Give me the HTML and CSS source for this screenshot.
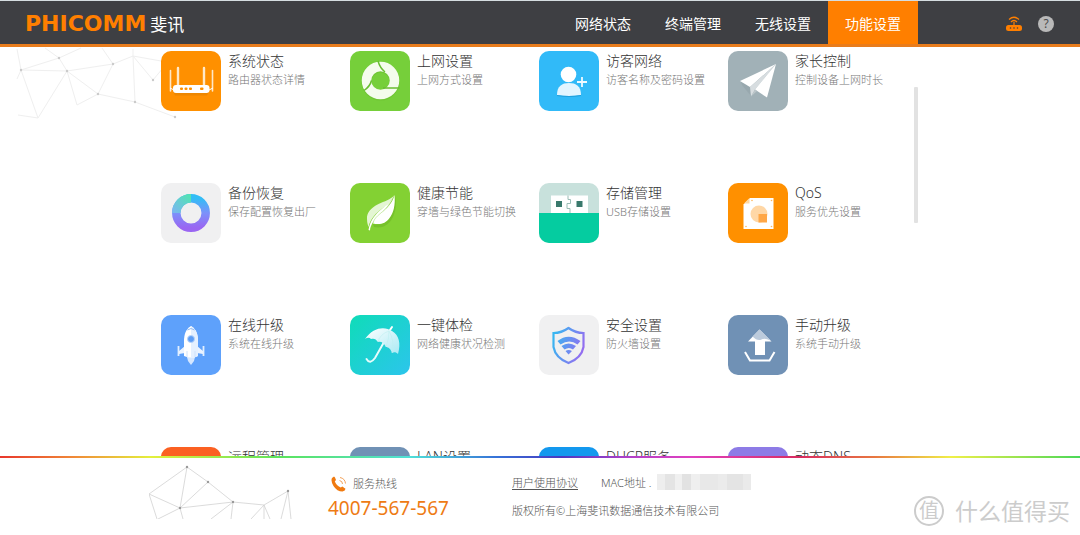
FILE: index.html
```html
<!DOCTYPE html>
<html lang="zh-CN">
<head>
<meta charset="utf-8">
<title>斐讯路由器 - 功能设置</title>
<link rel="stylesheet" href="styles.css">
</head>
<body>
<header class="header">
  <a class="logo" href="#"><span class="logo-en">PHICOMM</span><span class="logo-cn">斐讯</span></a>
  <nav class="nav">
    <a class="nav-item" href="#">网络状态</a>
    <a class="nav-item" href="#">终端管理</a>
    <a class="nav-item" href="#">无线设置</a>
    <a class="nav-item active" href="#">功能设置</a>
  </nav>
  <div class="tools">
    <button class="tool" aria-label="路由器">
      <svg width="16" height="16" viewBox="0 0 16 16"><rect x="0" y="9" width="16" height="6" rx="2.5" fill="#ff7f00"/><g fill="#3e3f43"><circle cx="4.500" cy="12" r=".8"/><circle cx="8" cy="12" r=".8"/><circle cx="11.500" cy="12" r=".8"/></g><g fill="none" stroke="#ff7f00" stroke-width="1.200"><path d="M3 3.500Q8-1 13 3.500M5 6Q8 3 11 6"/></g><path d="M7.400 6h1.200v3H7.400z" fill="#ff7f00"/></svg>
    </button>
    <button class="tool" aria-label="帮助"><span class="help">?</span></button>
  </div>
</header>

<main class="main">
  <svg class="mesh" width="180" height="76" viewBox="0 0 180 76">
    <g fill="none" stroke="#efefef"><path d="M17 2l4 21 38-12L45 1M59 11l22-10M59 11l8 13M21 23l46 1 46-7 20-8 28 5M67 24L77 58l21-11M21 23l17 48 29-47M21 23l-4 9M67 24l31 23M113 17L102 1M98 47l37 8-2-46V2M133 9l20 24M113 17L98 47M153 33l10-12M135 55l40 15M38 71l-20-3"/></g>
    <g fill="#cacaca"><circle cx="21" cy="23" r="1.200"/><circle cx="59" cy="11" r="1.200"/><circle cx="67" cy="24" r="1.200"/><circle cx="113" cy="17" r="1.200"/><circle cx="98" cy="47" r="1.200"/><circle cx="135" cy="55" r="1.200"/><circle cx="153" cy="33" r="1.200"/><circle cx="175" cy="70" r="1.200"/></g>
  </svg>
  <div class="panel">
    <div class="grid">
      <a class="card" href="#">
        <svg class="icon orange" viewBox="0 0 60 60"><path d="M12 40.500h36l-2 4H14z" fill="#dd7d00" opacity=".5"/><g stroke="#ffe8c8" stroke-linecap="round"><path d="M9.500 19.500V40M51.500 19.500V40" stroke-width="1.600"/><path d="M17 17v18M43 17v18" stroke-width="2.400"/></g><path d="M9 37l4 2M52 37l-4 2" stroke="#fff"/><rect x="12" y="34" width="36.500" height="8" rx="3" fill="#fff"/><g fill="#ff9000"><rect x="19" y="36.500" width="3" height="2.500" rx="1"/><rect x="23.500" y="36.500" width="3" height="2.500" rx="1"/><rect x="28" y="36.500" width="3" height="2.500" rx="1"/><rect x="39" y="36.500" width="3.500" height="2.500" rx="1"/></g></svg>
        <span class="text"><span class="title">系统状态</span><span class="desc">路由器状态详情</span></span>
      </a>
      <a class="card" href="#">
        <svg class="icon lime" viewBox="0 0 60 60"><circle cx="30.500" cy="30.500" r="14" fill="none" stroke="#67b82e" stroke-width="10" opacity=".4"/><circle cx="30.500" cy="29.500" r="14" fill="none" stroke="#f4fcec" stroke-width="9.500"/><g fill="none" stroke="#68bd31" stroke-width="1.500"><path d="M28 10q2 7 7 11"/><path d="M49.500 37H33"/><path d="M14 39.500q6-4 7.500-10"/></g></svg>
        <span class="text"><span class="title">上网设置</span><span class="desc">上网方式设置</span></span>
      </a>
      <a class="card" href="#">
        <svg class="icon sky" viewBox="0 0 60 60"><path d="M18 44c0-9 5-12 12-12s12 3 12 12q-12 2-24 0" fill="#e2f5ff"/><path d="M18 44q12 2 24 0v1q-12 2-24 0z" fill="#209fdb"/><circle cx="29.500" cy="23.500" r="7.800" fill="#fff"/><path d="M43 26v10M38 31h10" stroke="#f0faff" stroke-width="1.800"/></svg>
        <span class="text"><span class="title">访客网络</span><span class="desc">访客名称及密码设置</span></span>
      </a>
      <a class="card" href="#">
        <svg class="icon gray" viewBox="0 0 60 60"><path d="M13 31l10 5v9l-9-11z" fill="#8f9fa5" opacity=".5"/><path d="M48 13L12 30l10 6z" fill="#fff"/><path d="M48 13L22 36l1 9.500 4-7z" fill="#d7dde0"/><path d="M48 13L27 38.500l12 8z" fill="#fff"/><path d="M27 38.500l-4 7 6-5.500z" fill="#bcc6ca"/></svg>
        <span class="text"><span class="title">家长控制</span><span class="desc">控制设备上网时长</span></span>
      </a>

      <a class="card" href="#">
        <svg class="icon light" viewBox="0 0 60 60"><defs><linearGradient id="ring" x1="0" y1="0" x2="0" y2="1"><stop stop-color="#32bdf6"/><stop offset=".5" stop-color="#7c91fa"/><stop offset="1" stop-color="#9a66f2"/></linearGradient><linearGradient id="arc" x1="1" y1="0" x2="0" y2="1"><stop stop-color="#54e2b5"/><stop offset="1" stop-color="#78b9ed"/></linearGradient></defs><circle cx="30" cy="30" r="14.700" fill="none" stroke="url(#ring)" stroke-width="8.500"/><path d="M30 15.300A14.700 14.700 0 0 0 15.300 30" fill="none" stroke="url(#arc)" stroke-width="8.500"/></svg>
        <span class="text"><span class="title">备份恢复</span><span class="desc">保存配置恢复出厂</span></span>
      </a>
      <a class="card" href="#">
        <svg class="icon green" viewBox="0 0 60 60"><path d="M23 41c11 3 22-5 22-28l1 5c0 18-9 29-22 26z" fill="#65ac22" opacity=".45"/><path d="M44.500 12c-4 5-10 6-16 9-8 4-12 9-11.500 15 0 4 1 6 1.500 8 2-9 8-14 13-18 6-4 10-8 13-14" fill="#e4f6d3"/><path d="M44.500 12c1 10-1 18-5 23-4 6-10 7-16.500 5.500 1-5 5-8 10-12 6-5 10-10 11.500-16.500" fill="#fff"/><path d="M44.500 12C40 24 22 27 18.500 47l1.500.5C21 35 36 31 44.500 12" fill="#fff"/><path d="M23 40c2-8 11-10 17-20" stroke="#c3e6a0" stroke-width=".8" fill="none"/></svg>
        <span class="text"><span class="title">健康节能</span><span class="desc">穿墙与绿色节能切换</span></span>
      </a>
      <a class="card" href="#">
        <svg class="icon mint" viewBox="0 0 60 60"><path d="M0 30h60v30H0z" fill="#05cca0"/><path d="M12 12.500h37V30H12z" fill="#fff"/><path d="M29 12.500v4h2.500v4H28v5h3V30" fill="none" stroke="#9bbdb6"/><path d="M17 18h6v6h-6zM37.500 18h6v6h-6z" fill="#39796c"/></svg>
        <span class="text"><span class="title">存储管理</span><span class="desc">USB存储设置</span></span>
      </a>
      <a class="card" href="#">
        <svg class="icon orange" viewBox="0 0 60 60"><path d="M22 15h23.500v31h-30V21.500z" fill="#fff"/><path d="M16 20.500l5.500-5.500v5.500z" fill="#ffd8a1"/><circle cx="31" cy="31" r="8.500" fill="#ffd7a6"/><path d="M30.500 31h8.500v8.500h-8.500z" fill="#ffa747"/><g fill="#ffb75d"><circle cx="24" cy="17.500" r=".8"/><circle cx="43.500" cy="17.500" r=".8"/><circle cx="43.500" cy="43.500" r=".8"/><circle cx="18" cy="43.500" r=".8"/></g></svg>
        <span class="text"><span class="title">QoS</span><span class="desc">服务优先设置</span></span>
      </a>

      <a class="card" href="#">
        <svg class="icon blue" viewBox="0 0 60 60"><path d="M17.500 31v10M42.500 31v10" stroke="#e2efff" stroke-width="1.800"/><path d="M24 31l-6 5v3l6-1M36 31l6 5v3l-6-1" fill="#eaf3ff"/><path d="M26 42h8l-1 4-3 4-3-4z" fill="#d5e7ff"/><path d="M30 11c5 3 7 8 7 15v15q-7 3-14 0V26c0-7 2-12 7-15" fill="#fff"/><path d="M30 11c5 3 7 8 7 15v15q-3 2-7 2z" fill="#e4f0ff"/><path d="M26.500 15q3.500-3 7 0" fill="none" stroke="#92bbf2"/><circle cx="30" cy="24" r="3.500" fill="#5c9df5" stroke="#b8d5fc"/><path d="M26 36v6M34 36v6" stroke="#cfe2fb"/></svg>
        <span class="text"><span class="title">在线升级</span><span class="desc">系统在线升级</span></span>
      </a>
      <a class="card" href="#">
        <svg class="icon teal" viewBox="0 0 60 60"><defs><linearGradient id="canopy" x1="0" y1="0" x2="1" y2="1"><stop stop-color="#fff"/><stop offset="1" stop-color="#a9e9f4"/></linearGradient></defs><path d="M38 20L25 43q-5 7-8.500 1" fill="none" stroke="#e6fcfb" stroke-width="2" stroke-linecap="round"/><path d="M40 15l2-3" stroke="#fff" stroke-width="2" stroke-linecap="round"/><path d="M15 24c8-12 20-13 27-8 7 4 9 12 6 23-2-2-4-2-6-1-1-4-4-6-6-6-2-4-5-6-8-5-2-3-4-4-7-3-2-2-4-1-6 0" fill="url(#canopy)"/><path d="M39 16q-9 3-11 11M39 16q0 8-3 16M39 16q6 10 3 22" fill="none" stroke="#bdeef0" stroke-width=".6"/></svg>
        <span class="text"><span class="title">一键体检</span><span class="desc">网络健康状况检测</span></span>
      </a>
      <a class="card" href="#">
        <svg class="icon light" viewBox="0 0 60 60"><defs><linearGradient id="shield" gradientUnits="userSpaceOnUse" x1="14" y1="25" x2="46" y2="35"><stop stop-color="#38b6f1"/><stop offset="1" stop-color="#9a68f0"/></linearGradient></defs><path d="M29.500 13q7 5 15 5v14q-2 11-15 16-13-5-15-16V18q8 0 15-5z" fill="none" stroke="url(#shield)" stroke-width="2.200"/><g fill="url(#shield)"><path d="M18.500 26q11-8.500 23 0l-3 3.500q-8-6-17 0zM22.500 31q7-5 14.500 0l-3 3.500q-4-3-8.500 0zM26.500 36q3-2 6.500 0l-3.500 3.500z"/></g></svg>
        <span class="text"><span class="title">安全设置</span><span class="desc">防火墙设置</span></span>
      </a>
      <a class="card" href="#">
        <svg class="icon slate" viewBox="0 0 60 60"><path d="M27 25h10v15H27z" fill="#fff"/><path d="M20 26.500L31.500 14.500 43.500 26.500z" fill="#fff"/><path d="M31.500 14.500L42.500 25.500q-6-3-9-1-4 2-9-3z" fill="#bccbdc"/><path d="M17 37l5 8.500h19.500l5-8.500" fill="none" stroke="#fff" stroke-width="2"/></svg>
        <span class="text"><span class="title">手动升级</span><span class="desc">系统手动升级</span></span>
      </a>

      <a class="card" href="#"><span class="icon red"></span><span class="text"><span class="title">远程管理</span></span></a>
      <a class="card" href="#"><span class="icon slate"></span><span class="text"><span class="title">LAN设置</span></span></a>
      <a class="card" href="#"><span class="icon azure"></span><span class="text"><span class="title">DHCP服务</span></span></a>
      <a class="card" href="#"><span class="icon violet"></span><span class="text"><span class="title">动态DNS</span></span></a>
    </div>
    <div class="scrollbar"></div>
  </div>
</main>

<footer class="footer">
  <svg class="footer-mesh" width="144" height="61" viewBox="0 0 144 61">
    <g fill="none" stroke="#d2d2d2" stroke-width=".8"><path d="M0 36L38 9l21 15 25 20 31 3 24-14M0 36l31 14 7-41M0 36l8 25M31 50l28-26M31 50l53-6-22 17M31 50L9 61M31 50l3 11M84 44l-2 17M115 47l-13 14M115 47v14M115 47l6 14M139 33l-7 28M139 33l3 28"/></g>
    <g fill="#999"><circle cx="38" cy="9" r="1.200"/><circle cx="59" cy="24" r="1.200"/><circle cx="31" cy="50" r="1.200"/><circle cx="84" cy="44" r="1.200"/><circle cx="139" cy="33" r="1.200"/></g>
  </svg>
  <div class="hotline">
    <div class="hotline-label">
      <svg width="16" height="16" viewBox="0 0 16 16"><path d="M1 2l2-1.500q1 0 2 3.500L3.800 5.500q2 4.500 6 6l1.500-1 3.200 2.300q0 2-3 2.700Q6 15.500 2.500 10-.500 5 1 2" fill="#f07a10"/><g fill="none" stroke="#f3a25a"><path d="M8.500 4.500q3 .5 3 3.500M9 1.500q5 1 5.500 6"/></g></svg>
      <span>服务热线</span>
    </div>
    <div class="phone">4007-567-567</div>
  </div>
  <div class="legal">
    <div class="legal-row"><a class="agreement" href="#">用户使用协议</a><span class="mac">MAC地址 .</span><span class="mosaic"></span></div>
    <div class="copyright">版权所有©上海斐讯数据通信技术有限公司</div>
  </div>
  <div class="watermark"><span class="watermark-badge">值</span><span>什么值得买</span></div>
</footer>
</body>
</html>
```

FILE: styles.css
```css
* { box-sizing: border-box; }

body {
  margin: 0;
  height: 100vh;
  display: flex;
  flex-direction: column;
  background: #fff;
  color: #444;
  font-family: "Noto Sans", "Noto Sans CJK SC", sans-serif;
  font-size: 11px;
}

a { color: inherit; text-decoration: none; }

.header {
  flex: none;
  display: flex;
  height: 47px;
  border-top: 1px solid #d5dde0;
  border-bottom: 3px solid #e87c1c;
  background: #3e3f43;
}

.logo { display: flex; align-items: center; gap: 4px; padding: 2px 0 0 25px; }

.logo-en {
  color: #ff7f00;
  font-family: "DejaVu Sans", sans-serif;
  font-weight: 700;
  font-size: 22px;
}

.logo-cn { color: #fff; font-size: 17px; }

.nav { display: flex; margin-left: auto; }

.nav-item {
  display: flex;
  align-items: center;
  justify-content: center;
  width: 90px;
  color: #fff;
  font-size: 14px;
}

.nav-item.active { background: #ff7f00; }

.tools {
  display: flex;
  align-items: center;
  justify-content: flex-end;
  gap: 16px;
  width: 162px;
  padding: 2px 26px 0 0;
}

.tool { display: flex; padding: 0; border: 0; background: none; }

.help {
  width: 16px;
  height: 16px;
  border-radius: 50%;
  background: #b9b9b9;
  color: #4b4b4d;
  font: 12px/16px "Noto Sans", sans-serif;
  text-align: center;
}

.main { position: relative; flex: 1; min-height: 0; overflow: hidden; }

.mesh { position: absolute; top: 0; left: 0; }

.panel { position: relative; max-width: 758px; margin: 0 auto; padding-top: 4px; }

.grid {
  display: grid;
  grid-template-columns: repeat(4, 1fr);
  grid-auto-rows: 60px;
  row-gap: 72px;
  padding-right: 2px;
}

.card { display: flex; gap: 7px; }

.icon { flex: none; width: 60px; height: 60px; border-radius: 10px; }

.orange { background: #ff9000; }
.lime { background: #76cf3a; }
.sky { background: #31baf8; }
.gray { background: #a1b1b7; }
.light { background: #f0f0f1; }
.green { background: #83d133; }
.mint { background: #c8e1dc; }
.blue { background: #5ea1fb; }
.teal { background: linear-gradient(135deg, #0fdcb8, #2cc5ec); }
.slate { background: #7091b5; }
.red { background: #fb6022; }
.azure { background: #1398ee; }
.violet { background: #8d7be6; }

.text { display: flex; flex-direction: column; white-space: nowrap; }
.title { font-size: 14px; line-height: 20px; color: #333; font-weight: 300; }
.desc { font-size: 11px; line-height: 18px; color: #777; font-weight: 300; }

.scrollbar {
  position: absolute;
  top: 40px;
  right: 1px;
  width: 4px;
  height: 136px;
  border-radius: 1px;
  background: #e2e2e2;
}

.footer {
  position: relative;
  flex: none;
  display: grid;
  grid-template-columns: 144px 149px auto;
  column-gap: 35px;
  align-items: start;
  height: 79px;
  padding-left: 149px;
  border-top: 2px solid;
  border-image: linear-gradient(90deg, #e8352c, #f08a38 7%, #e4f03c 14%, #5be45c 26%, #50e0d8 38%, #3672d8 46%, #4a38c0 52%, #b040c8 58%, #e040c0 64%, #d82c60 74%, #e87840 81%, #f0f048 88%, #48d858) 1;
}

.hotline { padding-top: 18px; }
.hotline-label { display: flex; align-items: center; gap: 6px; padding-left: 3px; line-height: 16px; color: #555; font-weight: 300; }
.phone { margin-top: 2px; color: #ee7b14; font-size: 19px; line-height: 28px; }

.legal { padding-top: 15px; color: #555; font-weight: 300; }
.legal-row { display: flex; align-items: center; height: 18px; }
.agreement { text-decoration: underline; text-underline-offset: 2px; }
.mac { margin-left: 23px; }

.mosaic {
  width: 94px;
  height: 16px;
  margin-left: 6px;
  background: linear-gradient(90deg, #eee 0 8px, #e4e4e4 8px 18px, #f0f0f0 18px 25px, #e2e2e2 25px 34px, #efefef 34px 43px, #e8e8e8 43px 61px, #ebebeb 61px 70px, #e4e4e4 70px 86px, #eaeaea 86px);
}

.copyright { margin-top: 11px; line-height: 18px; }

.watermark {
  position: absolute;
  right: 10px;
  bottom: 9px;
  display: flex;
  align-items: center;
  gap: 11px;
  color: #ccc;
  font-size: 23px;
  line-height: 30px;
}

.watermark-badge {
  width: 30px;
  height: 30px;
  border: 2px solid #ccc;
  border-radius: 50%;
  font-size: 20px;
  line-height: 25px;
  text-align: center;
}
```
